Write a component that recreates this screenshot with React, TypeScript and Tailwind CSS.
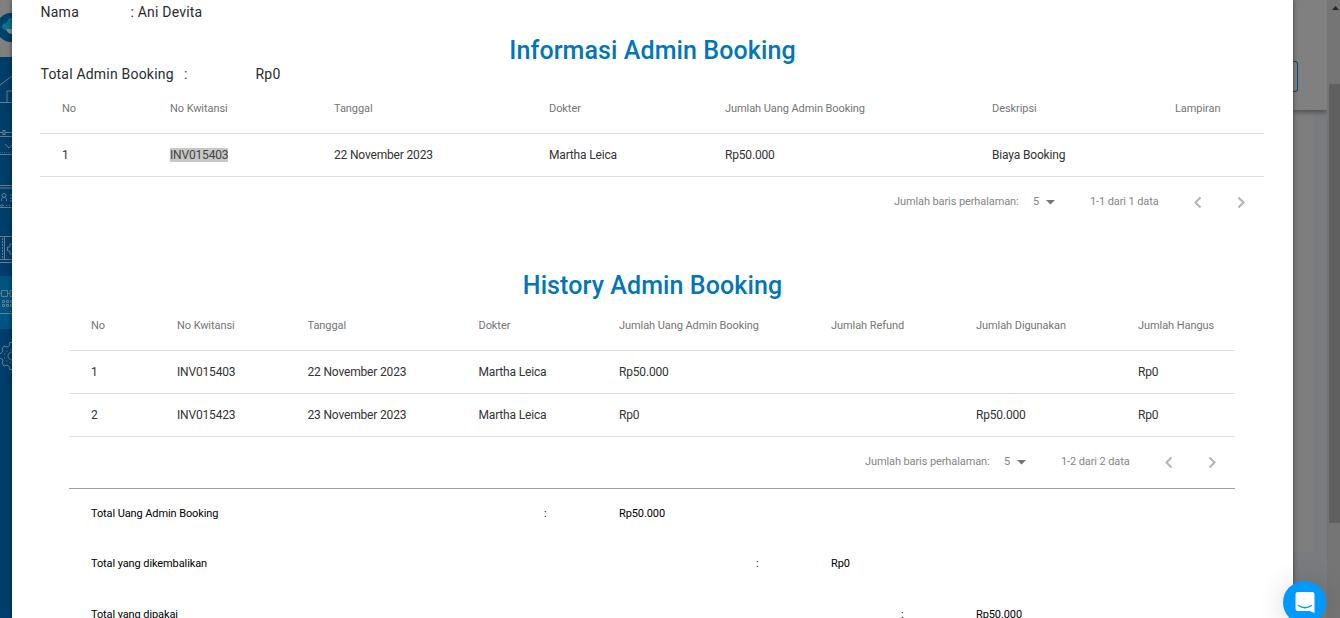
import clsx from "clsx";

interface Column {
  label: string;
  width: string;
}

interface TableProps {
  columns: Column[];
  rows: string[][];
  selected?: string;
}

const bookingColumns: Column[] = [
  { label: "No", width: "w-[108px]" },
  { label: "No Kwitansi", width: "w-[164px]" },
  { label: "Tanggal", width: "w-[215px]" },
  { label: "Dokter", width: "w-[176px]" },
  { label: "Jumlah Uang Admin Booking", width: "w-[267px]" },
  { label: "Deskripsi", width: "w-[183px]" },
  { label: "Lampiran", width: "w-[89px]" },
];

const bookingRows = [
  ["1", "INV015403", "22 November 2023", "Martha Leica", "Rp50.000", "Biaya Booking", ""],
];

const historyColumns: Column[] = [
  { label: "No", width: "w-[86px]" },
  { label: "No Kwitansi", width: "w-[130.5px]" },
  { label: "Tanggal", width: "w-[171px]" },
  { label: "Dokter", width: "w-[140.5px]" },
  { label: "Jumlah Uang Admin Booking", width: "w-[212px]" },
  { label: "Jumlah Refund", width: "w-[145px]" },
  { label: "Jumlah Digunakan", width: "w-[162px]" },
  { label: "Jumlah Hangus", width: "w-[97px]" },
];

const historyRows = [
  ["1", "INV015403", "22 November 2023", "Martha Leica", "Rp50.000", "", "", "Rp0"],
  ["2", "INV015423", "23 November 2023", "Martha Leica", "Rp0", "", "Rp50.000", "Rp0"],
];

const totals = [
  { label: "Total Uang Admin Booking", value: "Rp50.000", labelWidth: "w-[453px]", colonWidth: "w-[75px]", height: "h-[49px]" },
  { label: "Total yang dikembalikan", value: "Rp0", labelWidth: "w-[665px]", colonWidth: "w-[75px]", height: "h-[51px]" },
  { label: "Total yang dipakai", value: "Rp50.000", labelWidth: "w-[810px]", colonWidth: "w-[75px]", height: "h-[50px]" },
];

const DataTable = ({ columns, rows, selected }: TableProps) => (
  <div>
    <div className="flex h-[50px] items-center border-b border-[#dedede] pt-0.5 pl-[22px] text-[11px] text-[#757575]">
      {columns.map((col) => (
        <div key={col.label} className={clsx("shrink-0 whitespace-nowrap tracking-[-0.07px]", col.width)}>
          {col.label}
        </div>
      ))}
    </div>
    {rows.map((row) => (
      <div
        key={row[0]}
        className="flex h-[43px] items-center border-b border-[#dedede] pl-[22px] text-xs tracking-[-0.17px] text-[#333]"
      >
        {row.map((cell, i) => (
          <div key={i} className={clsx("shrink-0 whitespace-nowrap", columns[i].width)}>
            <span className={clsx("leading-[14px]", cell && cell === selected && "inline-block bg-[#c7c7c7] text-[#444]")}>
              {cell}
            </span>
          </div>
        ))}
      </div>
    ))}
  </div>
);

const Pagination = ({ range }: { range: string }) => (
  <div className="flex h-[50px] items-center justify-end pr-[13px] text-[11px] text-[#858585]">
    <span className="w-[139px] tracking-[-0.1px]">Jumlah baris perhalaman:</span>
    <span className="w-[13px]">5</span>
    <svg className="mt-px mr-[35px] h-[5px] w-[9px]" viewBox="0 0 9 5">
      <path d="M0 0h9L4.5 4.5z" fill="#757575" />
    </svg>
    <span className="w-[98px] tracking-[-0.1px]">{range}</span>
    <svg className="h-5 w-5" viewBox="0 0 20 20" fill="none" stroke="#b4b4b4" strokeWidth="2">
      <path d="M12.5 5.500 7.500 10.500l5 5" />
    </svg>
    <svg className="ml-[23px] h-5 w-5" viewBox="0 0 20 20" fill="none" stroke="#b4b4b4" strokeWidth="2">
      <path d="m7.500 5.500 5 5-5 5" />
    </svg>
  </div>
);

const Title = ({ children }: { children: string }) => (
  <h2 className="h-7 text-center text-[25px] leading-[29px] font-medium tracking-[0.1px] text-[#0276b9]">
    {children}
  </h2>
);

// slice of the side menu that stays visible next to the dialog
const SideMenu = () => (
  <svg className="h-[618px] w-3 shrink-0" viewBox="0 0 12 618" fill="none" stroke="#6b7c88">
    <rect width="12" height="618" fill="#003e6b" stroke="none" />
    <rect width="12" height="57" fill="#808080" stroke="none" />
    <circle cx="11" cy="27.500" r="14.500" fill="#00406b" stroke="none" />
    <path d="M12 18C8 18 7 20 7 23c-3 0-5 1.500-5 3.500S4 30 6 30h6z" fill="#067492" stroke="none" />
    <path d="M6 29h6v5c-3 0-5-2-6-5z" fill="#868c8c" stroke="none" />
    <rect y="276" width="12" height="53" fill="#005484" stroke="none" />
    <path d="M0 85 12 76M7 102V91h5M0 102.500h12" />
    <path d="M0 132.500h3M5.500 132.500H12M0 136.500h12" />
    <rect x="3" y="130.500" width="2" height="4" />
    <path d="m5 144 4 4 3-3M0 154.500h12" />
    <path d="M0 152.500h12" strokeDasharray="1 1" opacity=".5" />
    <path d="M0 185.500h12M0 188h12M0 207.500h12" />
    <circle cx="4" cy="195.500" r="2" />
    <path d="M1.500 201v-1.500c0-3 5-3 5 0v1.500M10 195h2M10 198h2M10 201h2" />
    <path d="M0 205.500h12" strokeDasharray="1 2" />
    <path d="M2 204v3" />
    <path d="M0 236.500h12M4.500 237v23M0 259.500h12M0 262.500h12M12 244h-2v3H7.500v4H10v3h2" />
    <path d="M2.500 238v20" strokeDasharray="2 1" />
    <path d="M0 293.500h2M1.500 290.500h6v6h-6zM8 293.500h2M12 290.500h-2v6h2" />
    <path d="M2.500 300.500h2v2h-2zM6.500 300.500h2v2h-2zM10.500 300.500h2v2h-2zM2.500 304.500h2v2h-2zM6.500 304.500h2v2h-2zM10.500 304.500h2v2h-2zM0 313.500h12M10 311.500h1" />
    <path d="M12 342.500H9.500v3L7 347l-3-1-2 3 1 2-3 3M0 358l3 2-1 3 2 3 3-1 2.500 2v2.500H12" />
    <path d="M12 350c-4 0-8 2-8 6s4 7 8 7" strokeDasharray="2 2" opacity=".6" />
    <path d="M12 352c-2 0-4 1.500-4 4s2 4 4 4" />
  </svg>
);

const PageBehind = () => (
  <div className="flex h-[618px] w-[47px] shrink-0 bg-[#757575]">
    <div className="flex w-[34px] flex-col bg-[#797b7e]">
      <div className="relative flex h-[110px] flex-col bg-[#808080] pt-[61px] shadow-[0_2px_5px_rgba(0,0,0,0.4)]">
        <div className="h-[31px] w-[5px] rounded-r-[3px] border border-l-0 border-[#0a4c78]" />
      </div>
      <div className="h-[442px] w-5 bg-[#7e7e7e]" />
    </div>
    <div className="relative flex w-[13px] flex-col items-end bg-[#757575]">
      <svg className="mt-[5px] mr-px h-[5px] w-[7px]" viewBox="0 0 7 5">
        <path d="M0 5h7L3.500 1z" fill="#282828" />
      </svg>
      <div className="mt-[74px] h-[439px] w-[11px] bg-[#606060]" />
    </div>
  </div>
);

const App = () => {
  return (
    <div className="relative flex h-[618px] w-[1340px] overflow-hidden bg-[#003e6b] font-[Roboto,sans-serif]">
      <SideMenu />
      <main className="relative z-10 h-[618px] w-[1281px] shrink-0 overflow-hidden bg-white shadow-[0_0_5px_rgba(0,0,0,0.5)]">
        <div className="flex h-6 items-center pl-[28.5px] text-sm tracking-[0.25px] text-[#2b2b2b]">
          <span className="w-[90px]">Nama</span>
          <span className="tracking-[0.2px]">: Ani Devita</span>
        </div>
        <div className="pt-3">
          <Title>Informasi Admin Booking</Title>
        </div>
        <div className="flex h-5 items-center pl-[28.5px] text-sm tracking-[0.2px] text-[#2b2b2b]">
          <span className="w-[143.5px]">Total Admin Booking</span>
          <span className="w-[71.5px]">:</span>
          <span>Rp0</span>
        </div>
        <section className="mr-[29px] ml-7">
          <DataTable columns={bookingColumns} rows={bookingRows} selected="INV015403" />
          <Pagination range="1-1 dari 1 data" />
        </section>
        <div className="pt-11">
          <Title>History Admin Booking</Title>
        </div>
        <section className="mr-[58px] ml-[57px] pt-0.5">
          <DataTable columns={historyColumns} rows={historyRows} />
          <Pagination range="1-2 dari 2 data" />
          <div className="mt-px border-t border-[#a0a0a0]">
            {totals.map((total) => (
              <div
                key={total.label}
                className={clsx("flex items-center pt-0.5 pl-[22px] text-[11px] tracking-[-0.1px] text-black", total.height)}
              >
                <span className={total.labelWidth}>{total.label}</span>
                <span className={total.colonWidth}>:</span>
                <span>{total.value}</span>
              </div>
            ))}
          </div>
        </section>
      </main>
      <PageBehind />
      <button
        className="absolute top-[581px] left-[1283px] z-20 flex h-[43px] w-[43px] items-center justify-center rounded-full bg-[#0099ff] shadow-[0_2px_28px_rgba(0,0,0,0.16)]"
        aria-label="Chat"
      >
        <svg className="h-[22px] w-5" viewBox="0 0 20 22">
          <path d="M3 0h14q2.500 0 2.500 2.500V21l-4.500-2H3Q.5 19 .5 16.500v-14Q.5 0 3 0z" fill="white" />
          <path d="M3.500 13.500q6.500 4.500 13 0" fill="none" stroke="#0099ff" strokeWidth="1.300" strokeLinecap="round" />
        </svg>
      </button>
    </div>
  );
};

export default App;
